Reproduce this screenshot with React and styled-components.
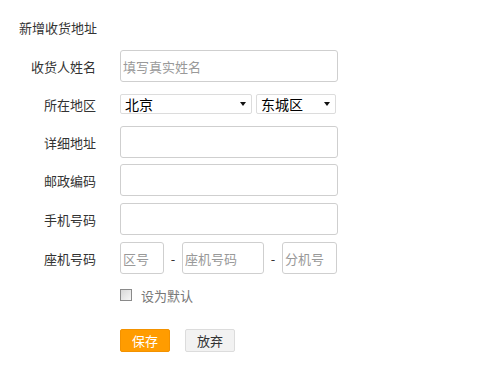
import React from "react";
import styled, { createGlobalStyle } from "styled-components";

const Global = createGlobalStyle`
  html, body { margin: 0; padding: 0; background: #fff; }
  body { font-family: "Noto Sans CJK SC", "Noto Sans", sans-serif; font-size: 13px; color: #333; }
  * { box-sizing: border-box; }
`;

const Page = styled.div`
  padding: 18px 0 0 19px;
  width: 485px;
  height: 377px;
`;

const Title = styled.h3`
  margin: 0 0 13px;
  font-size: 13px;
  font-weight: normal;
  line-height: 19px;
  color: #333;
`;

const Form = styled.form`
  display: flex;
  flex-direction: column;
  gap: 6px;
`;

const Row = styled.div`
  display: flex;
  align-items: center;
  height: ${(p) => p.$h || 32}px;
  margin-top: ${(p) => p.$mt || 0}px;
`;

const Label = styled.label`
  width: 77px;
  margin-right: 24px;
  text-align: right;
  font-size: 13px;
  color: #333;
  white-space: nowrap;
`;

const Spacer = styled.div`
  width: 101px;
  flex: none;
`;

const Input = styled.input`
  width: ${(p) => p.$w || 218}px;
  height: 32px;
  padding: 0 2px;
  border: 1px solid #cfcfcf;
  border-radius: 3px;
  font-family: inherit;
  font-size: 13px;
  color: #333;
  outline: none;
  background: #fff;
  &::placeholder { color: #999; }
`;

const SelectWrap = styled.div`
  position: relative;
  width: ${(p) => p.$w}px;
  height: 20px;
  margin-right: ${(p) => p.$mr || 0}px;
  &::after {
    content: "";
    position: absolute;
    right: 6px;
    top: 8px;
    border-left: 3.5px solid transparent;
    border-right: 3.5px solid transparent;
    border-top: 4px solid #111;
    pointer-events: none;
  }
`;

const Select = styled.select`
  appearance: none;
  -webkit-appearance: none;
  width: 100%;
  height: 20px;
  padding: 0 0 0 4px;
  border: 1px solid #dcdcdc;
  border-radius: 2px;
  background: #fff;
  font-family: inherit;
  font-size: 14px;
  line-height: 18px;
  color: #000;
  outline: none;
`;

const Dash = styled.span`
  width: 18px;
  text-align: center;
  color: #333;
  font-size: 13px;
`;

const Check = styled.input`
  appearance: none;
  -webkit-appearance: none;
  width: 12px;
  height: 12px;
  margin: 0 9px 0 0;
  border: 1px solid #8a8a8a;
  background: linear-gradient(135deg, #d8d8d8, #f6f6f6);
`;

const CheckText = styled.span`
  color: #777;
  font-size: 13px;
`;

const Button = styled.button`
  width: 50px;
  height: 23px;
  margin-right: ${(p) => p.$mr || 0}px;
  padding: 0;
  border: 1px solid ${(p) => (p.$primary ? "#f39200" : "#dcdcdc")};
  border-radius: 2px;
  background: ${(p) => (p.$primary ? "#ff9c00" : "#f2f2f2")};
  color: ${(p) => (p.$primary ? "#fff" : "#333")};
  font-family: inherit;
  font-size: 13px;
  line-height: 21px;
`;

export default function App() {
  return (
    <Page>
      <Global />
      <Title>新增收货地址</Title>
      <Form onSubmit={(e) => e.preventDefault()}>
        <Row>
          <Label>收货人姓名</Label>
          <Input placeholder="填写真实姓名" />
        </Row>
        <Row>
          <Label>所在地区</Label>
          <SelectWrap $w={132} $mr={4}>
            <Select defaultValue="北京">
              <option>北京</option>
            </Select>
          </SelectWrap>
          <SelectWrap $w={80}>
            <Select defaultValue="东城区">
              <option>东城区</option>
            </Select>
          </SelectWrap>
        </Row>
        <Row>
          <Label>详细地址</Label>
          <Input />
        </Row>
        <Row>
          <Label>邮政编码</Label>
          <Input />
        </Row>
        <Row $mt={1}>
          <Label>手机号码</Label>
          <Input />
        </Row>
        <Row $mt={1}>
          <Label>座机号码</Label>
          <Input $w={44} placeholder="区号" />
          <Dash>-</Dash>
          <Input $w={82} placeholder="座机号码" />
          <Dash>-</Dash>
          <Input $w={55} placeholder="分机号" />
        </Row>
        <Row $h={20} $mt={5}>
          <Spacer />
          <Check type="checkbox" />
          <CheckText>设为默认</CheckText>
        </Row>
        <Row $h={23} $mt={18}>
          <Spacer />
          <Button $primary $mr={15} type="submit">保存</Button>
          <Button type="button">放弃</Button>
        </Row>
      </Form>
    </Page>
  );
}
